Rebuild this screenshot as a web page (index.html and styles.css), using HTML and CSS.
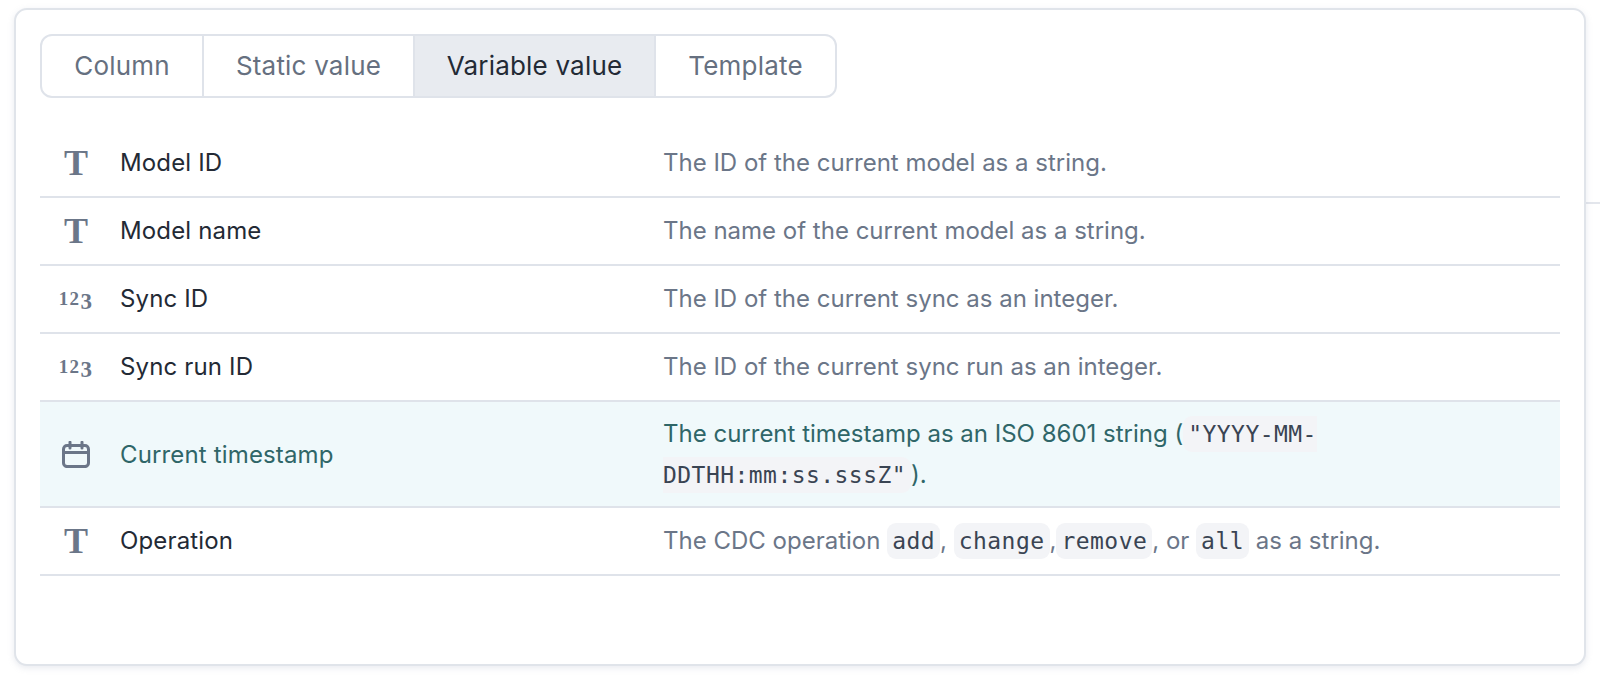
FILE: index.html
```html
<!DOCTYPE html>
<html lang="en">
<head>
<meta charset="utf-8">
<title>Variable value</title>
<link rel="stylesheet" href="styles.css">
</head>
<body>
<div class="backdrop-line"></div>
<main class="card">
  <div class="tabs">
    <div class="tab tab-column">Column</div>
    <div class="tab tab-static">Static value</div>
    <div class="tab tab-active">Variable value</div>
    <div class="tab tab-template">Template</div>
  </div>
  <div class="rows">
    <div class="row">
      <div class="icon"><span class="glyph-t">T</span></div>
      <div class="name">Model ID</div>
      <div class="desc">The ID of the current model as a string.</div>
    </div>
    <div class="row">
      <div class="icon"><span class="glyph-t">T</span></div>
      <div class="name">Model name</div>
      <div class="desc">The name of the current model as a string.</div>
    </div>
    <div class="row">
      <div class="icon"><span class="glyph-n">12<span class="glyph-n-low">3</span></span></div>
      <div class="name">Sync ID</div>
      <div class="desc">The ID of the current sync as an integer.</div>
    </div>
    <div class="row">
      <div class="icon"><span class="glyph-n">12<span class="glyph-n-low">3</span></span></div>
      <div class="name">Sync run ID</div>
      <div class="desc">The ID of the current sync run as an integer.</div>
    </div>
    <div class="row row-selected">
      <div class="icon">
        <svg class="calendar" viewBox="0 0 28 27" width="28" height="27" aria-hidden="true">
          <rect x="1.5" y="4.6" width="25" height="21" rx="3.6"/>
          <path d="M8 1.2V7M20 1.2V7M1.5 11.4H26.5"/>
        </svg>
      </div>
      <div class="name">Current timestamp</div>
      <div class="desc">The current timestamp as an ISO 8601 string (<code>"YYYY-MM-DDTHH:mm:ss.sssZ"</code>).</div>
    </div>
    <div class="row">
      <div class="icon"><span class="glyph-t">T</span></div>
      <div class="name">Operation</div>
      <div class="desc">The CDC operation <code>add</code>, <code>change</code>,<code>remove</code>, or <code>all</code> as a string.</div>
    </div>
  </div>
</main>
</body>
</html>
```
FILE: styles.css
```css
* { box-sizing: border-box; }
html, body { height: 100%; }
body {
  margin: 0;
  background: #fff;
  font-family: Inter, "Liberation Sans", sans-serif;
  font-size: 24px;
  color: #232a35;
  padding: 8px 14px 0 14px;
  overflow: hidden;
  position: relative;
}
.backdrop-line {
  position: absolute;
  top: 202px;
  right: 0;
  width: 14px;
  height: 2px;
  background: #e3e6ec;
}
.card {
  height: 658px;
  background: #fff;
  border: 2px solid #e0e4ea;
  border-radius: 13px;
  padding: 24px 24px 0 24px;
  box-shadow: 0 2px 6px rgba(150, 160, 180, 0.22);
  position: relative;
}
.tabs {
  display: inline-flex;
  height: 64px;
  border: 2px solid #dfe3ea;
  border-radius: 12px;
  overflow: hidden;
  color: #667080;
  font-size: 26px;
  letter-spacing: 0.2px;
  vertical-align: top;
}
.tab {
  display: flex;
  align-items: center;
  justify-content: center;
  padding-bottom: 2px;
  border-right: 2px solid #dfe3ea;
}
.tab-column { width: 162px; }
.tab-static { width: 211px; }
.tab-active { width: 241px; background: #e8ebf0; color: #232a35; }
.tab-template { width: 179px; border-right: 0; }
.rows { margin-top: 32px; width: 1520px; }
.row {
  display: flex;
  align-items: center;
  padding: 13px 0;
  border-bottom: 2px solid #dfe3ea;
  line-height: 40px;
}
.row-selected { background: #f0f9fb; color: #2f6668; padding: 11px 0; line-height: 41px; }
.icon {
  width: 80px;
  flex: none;
  display: flex;
  justify-content: center;
  padding-right: 8px;
  color: #6b7688;
}
.glyph-t {
  font-family: "Liberation Serif", serif;
  font-weight: 700;
  font-size: 36px;
  line-height: 40px;
}
.glyph-n {
  font-family: "Liberation Serif", serif;
  font-weight: 700;
  font-size: 19px;
  letter-spacing: 1.4px;
  line-height: 40px;
}
.glyph-n-low {
  font-size: 23px;
  vertical-align: -4px;
  line-height: 0;
}
.calendar {
  display: block;
  fill: none;
  stroke: #6b7688;
  stroke-width: 3;
  stroke-linecap: round;
}
.name { width: 543px; flex: none; letter-spacing: 0.15px; }
.desc { width: 730px; color: #6b7688; }
.row-selected .desc { color: #2f6668; }
code {
  font-family: "DejaVu Sans Mono", "Liberation Mono", monospace;
  font-size: 23px;
  line-height: 1;
  letter-spacing: 0.45px;
  color: #3a4453;
  background: #f3f4f7;
  border-radius: 9px;
  padding: 5px;
}
```
